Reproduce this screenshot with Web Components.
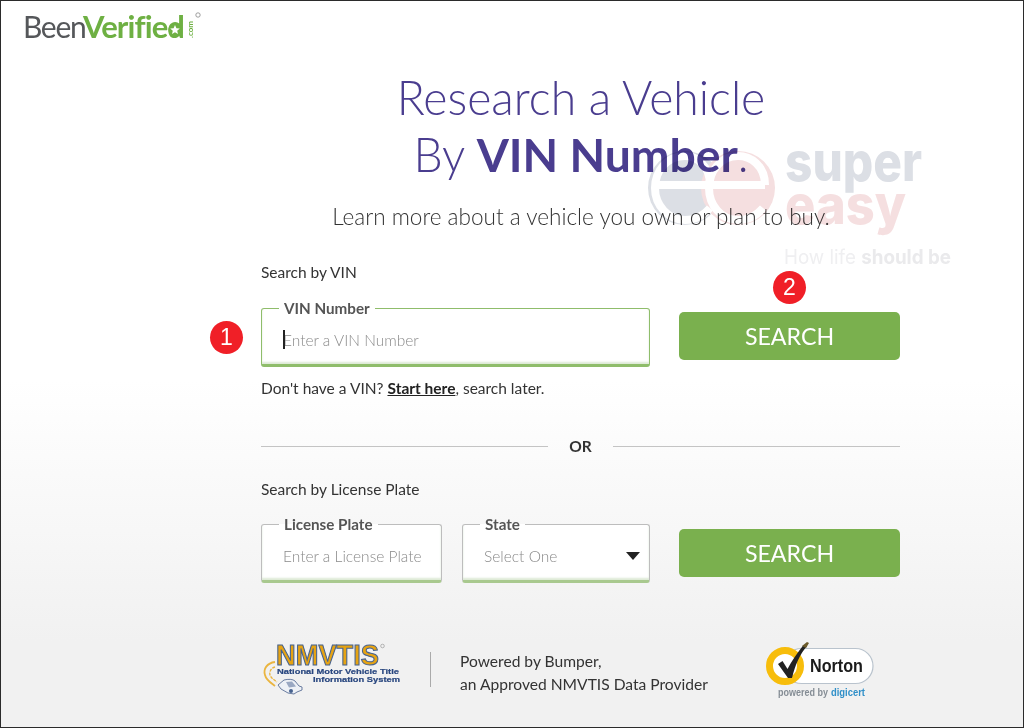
<!DOCTYPE html>
<html lang="en">
<head>
<meta charset="utf-8">
<title>Research a Vehicle</title>
<style>
  html, body { margin: 0; padding: 0; }
  body { font-family: Lato, "Liberation Sans", sans-serif; color: #333; }
</style>
</head>
<body>
<vin-page>
  <brand-logo></brand-logo>
  <hero-title></hero-title>
  <search-panel></search-panel>
  <trust-row></trust-row>
  <sticker-mark></sticker-mark>
</vin-page>

<script>
class VinPage extends HTMLElement {
  constructor() {
    super();
    this.attachShadow({ mode: "open" }).innerHTML = `
      <style>
        :host {
          display: block;
          position: relative;
          width: 1024px;
          height: 728px;
          box-sizing: border-box;
          overflow: hidden;
          border: 1px solid #2b2b2b;
          background: linear-gradient(#fff 0, #fff 380px, #f1f1f1 640px, #f1f1f1 100%);
        }
      </style>
      <slot></slot>
    `;
  }
}

class BrandLogo extends HTMLElement {
  constructor() {
    super();
    this.attachShadow({ mode: "open" }).innerHTML = `
      <style>
        :host { display: block; height: 46px; padding-left: 22px; }
        svg { display: block; }
        text { font-family: Lato, "Open Sans", sans-serif; }
      </style>
      <svg width="190" height="46" viewBox="0 0 190 46">
        <text x="0" y="37" font-size="30" fill="#55575a" letter-spacing="-1.300">Been</text>
        <text x="60" y="37" font-size="31" font-weight="700" fill="#6eb043" letter-spacing="-.900">Verified</text>
        <circle cx="152" cy="29" r="6.500" fill="#6eb043"/>
        <path d="M152 24l1.400 3.200 3.400.3-2.600 2.200.8 3.300-3-1.800-3 1.800.8-3.300-2.600-2.200 3.400-.3z" fill="#fff"/>
        <text transform="translate(170 37) rotate(-90)" font-size="8" font-weight="700" fill="#6eb043">.com</text>
        <circle cx="175" cy="14" r="2.200" fill="none" stroke="#888" stroke-width=".8"/>
      </svg>
    `;
  }
}

class HeroTitle extends HTMLElement {
  constructor() {
    super();
    this.attachShadow({ mode: "open" }).innerHTML = `
      <style>
        :host {
          display: block;
          margin: 22px 123px 0 261px;
          text-align: center;
          color: #4a3d8f;
        }
        h1 { margin: 0; font-size: 46.300px; line-height: 57px; font-weight: 300; }
        b { font-weight: 700; }
        p { margin: 19px 0 0; font-size: 22.550px; line-height: 30px; font-weight: 300; color: #333; }
      </style>
      <h1>Research a Vehicle<br>By <b>VIN Number</b>.</h1>
      <p>Learn more about a vehicle you own or plan to buy.</p>
    `;
  }
}

class FieldBox extends HTMLElement {
  constructor() {
    super();
    const label = this.getAttribute("label");
    const hint = this.getAttribute("placeholder");
    const accent = this.hasAttribute("accent");
    const caret = this.hasAttribute("caret");
    const select = this.hasAttribute("select");
    this.attachShadow({ mode: "open" }).innerHTML = `
      <style>
        :host { display: block; min-width: 0; }
        fieldset {
          margin: 0;
          min-width: 0;
          height: 66px;
          box-sizing: border-box;
          padding: 0 10px 0 21px;
          border: 1px solid ${accent ? "#8fbd6b" : "#bdbdbd"};
          border-bottom: 3px solid ${accent ? "#8fbd6b" : "#a9c98f"};
          border-radius: 3px;
          background: #fff;
          box-shadow: inset 0 -2px 2px rgba(120, 170, 90, .25);
          display: flex;
          align-items: center;
          justify-content: space-between;
        }
        legend {
          padding: 0 5px 0 5px;
          margin-left: -4px;
          font-size: 15.200px;
          line-height: 15px;
          font-weight: 700;
          color: #555;
        }
        .hint {
          position: relative;
          font-size: 15.500px;
          font-weight: 300;
          color: #8a8a8a;
          white-space: nowrap;
        }
        .caret::before {
          content: "";
          position: absolute;
          left: 0;
          top: -1px;
          width: 1.500px;
          height: 19px;
          background: #222;
        }
        .arrow {
          width: 0; height: 0;
          margin-right: -1px;
          border-left: 7px solid transparent;
          border-right: 7px solid transparent;
          border-top: 8px solid #222;
        }
      </style>
      <fieldset>
        <legend>${label}</legend>
        <span class="hint ${caret ? "caret" : ""}">${hint}</span>
        ${select ? '<span class="arrow"></span>' : ""}
      </fieldset>
    `;
  }
}

class SearchButton extends HTMLElement {
  constructor() {
    super();
    this.attachShadow({ mode: "open" }).innerHTML = `
      <style>
        :host { display: block; }
        button {
          display: block;
          width: 221px;
          height: 48px;
          padding: 0;
          border: 0;
          border-radius: 5px;
          background: #7ab04e;
          color: #fff;
          font: 400 23.200px Lato, sans-serif;
        }
      </style>
      <button type="button"><slot></slot></button>
    `;
  }
}

class StepBadge extends HTMLElement {
  constructor() {
    super();
    this.attachShadow({ mode: "open" }).innerHTML = `
      <style>
        :host {
          position: absolute;
          width: 33px;
          height: 33px;
          border-radius: 50%;
          background: #f01f27;
          color: #fff;
          font: 400 23px/33px "Liberation Sans", sans-serif;
          text-align: center;
        }
      </style>
      <slot></slot>
    `;
  }
}

class OrDivider extends HTMLElement {
  constructor() {
    super();
    this.attachShadow({ mode: "open" }).innerHTML = `
      <style>
        :host {
          display: flex;
          align-items: center;
          gap: 21px;
          width: 639px;
          font-size: 15.500px;
          font-weight: 700;
          color: #333;
        }
        i { flex: 1; height: 1px; background: #c4c4c4; }
      </style>
      <i></i><span><slot></slot></span><i></i>
    `;
  }
}

class SearchPanel extends HTMLElement {
  constructor() {
    super();
    this.attachShadow({ mode: "open" }).innerHTML = `
      <style>
        :host {
          display: block;
          position: relative;
          width: 640px;
          margin: 31px 0 0 260px;
          font-size: 15.500px;
          color: #333;
        }
        .label { line-height: 18px; }
        .row { display: grid; align-items: end; column-gap: 29px; }
        .vin { grid-template-columns: 389px 221px; margin-top: 20px; }
        .vin search-button { margin-bottom: 7px; }
        .plate { grid-template-columns: 181px 188px 221px; column-gap: 20px; margin-top: 19px; }
        .plate search-button { margin: 0 0 6px 9px; }
        .help { margin-top: 12px; line-height: 18px; }
        .help a { color: #222; font-weight: 700; text-decoration: underline; }
        or-divider { margin-top: 40px; height: 18px; }
        .second { margin-top: 25px; }
        .one { left: -51px; top: 58px; }
        .two { left: 512px; top: 8px; }
      </style>
      <div class="label">Search by VIN</div>
      <div class="row vin">
        <field-box label="VIN Number" placeholder="Enter a VIN Number" accent caret></field-box>
        <search-button>SEARCH</search-button>
      </div>
      <div class="help">Don't have a VIN? <a>Start here</a>, search later.</div>
      <or-divider>OR</or-divider>
      <div class="label second">Search by License Plate</div>
      <div class="row plate">
        <field-box label="License Plate" placeholder="Enter a License Plate"></field-box>
        <field-box label="State" placeholder="Select One" select></field-box>
        <search-button>SEARCH</search-button>
      </div>
      <step-badge class="one">1</step-badge>
      <step-badge class="two">2</step-badge>
    `;
  }
}

class TrustRow extends HTMLElement {
  constructor() {
    super();
    this.attachShadow({ mode: "open" }).innerHTML = `
      <style>
        :host {
          display: flex;
          align-items: flex-start;
          width: 640px;
          height: 70px;
          margin: 55px 0 0 260px;
          font-size: 15.600px;
          line-height: 23px;
          color: #333;
        }
        svg { display: block; flex: none; }
        .rule { width: 1px; height: 35px; margin: 14px 29px 0 28px; background: #aaa; flex: none; }
        .copy { width: 306px; margin-top: 12px; flex: none; }
        text { font-family: "Liberation Sans", Arial, sans-serif; }
      </style>
      <svg width="141" height="64" viewBox="0 0 141 64">
        <text x="15" y="27" font-size="29" font-weight="700" fill="#e6a312" stroke="#46628f" stroke-width="1.100" textLength="103" lengthAdjust="spacingAndGlyphs">NMVTIS</text>
        <circle cx="121.500" cy="8" r="1.800" fill="none" stroke="#999" stroke-width=".7"/>
        <text x="16" y="36" font-size="8" font-weight="700" fill="#28467f" stroke="#28467f" stroke-width=".2" textLength="122" lengthAdjust="spacingAndGlyphs">National Motor Vehicle Title</text>
        <text x="52" y="44" font-size="8" font-weight="700" fill="#28467f" stroke="#28467f" stroke-width=".2" textLength="87" lengthAdjust="spacingAndGlyphs">Information System</text>
        <path d="M14 24C6 25 2 31 4 37c1 5 6 8 10 11" fill="none" stroke="#eab540" stroke-width="1.800"/>
        <path d="M14 29c-4 1-6 5-5 8 1 3 4 5 7 7" fill="none" stroke="#eab540" stroke-width="1.300" stroke-dasharray="3 1"/>
        <path d="M17 47l6-5c4-1 9-1 11 1l4 5 3 1v3l-5 2-3 2-6-1-7-4z" fill="#eef1f6" stroke="#5b6f96" stroke-width=".9"/>
        <path d="M25 44l6-.5 4 5-7 1z" fill="#9aa8c2"/>
        <circle cx="30" cy="53" r="2" fill="#46628f"/>
      </svg>
      <span class="rule"></span>
      <div class="copy">Powered by Bumper,<br>an Approved NMVTIS Data Provider</div>
      <svg width="110" height="64" viewBox="0 0 110 64">
        <rect x="18" y="10.500" width="89" height="35" rx="17.500" fill="#fff" stroke="#b9c3cd" stroke-width="1.200"/>
        <circle cx="19" cy="28" r="15.500" fill="#fff" stroke="#f7bd0b" stroke-width="7"/>
        <path d="M12 26l4.500-3 5 8c4-8 9-15 16-24l3.500 1c-7 8-12 19-15 32h-4z" fill="#222"/>
        <path d="M36 8l5-4 2 1-3 5z" fill="#6b5a2a"/>
        <text x="44" y="34" font-size="18" font-weight="700" fill="#1b1b1b" textLength="53" lengthAdjust="spacingAndGlyphs">Norton</text>
        <text x="12" y="58" font-size="10" font-weight="700" fill="#858d95" textLength="50" lengthAdjust="spacingAndGlyphs">powered by</text>
        <text x="65" y="58" font-size="10.500" font-weight="700" fill="#2f8fc8" textLength="34" lengthAdjust="spacingAndGlyphs">digicert</text>
      </svg>
    `;
  }
}

// the faint site watermark that lies over the page
class StickerMark extends HTMLElement {
  constructor() {
    super();
    this.attachShadow({ mode: "open" }).innerHTML = `
      <style>
        :host { position: absolute; left: 640px; top: 115px; pointer-events: none; mix-blend-mode: multiply; }
        svg { display: block; filter: blur(.5px); }
        text { font-family: Inter, "Liberation Sans", sans-serif; }
      </style>
      <svg width="330" height="165" viewBox="0 -15 330 165">
        <circle cx="44" cy="57" r="37" fill="#dcdfe5"/>
        <circle cx="97" cy="57" r="37" fill="#f5dfe0"/>
        <path d="M16 54h53M69 54C69 34 55 25 44 25 26 25 14 40 14 57s13 32 30 32c10 0 19-5 25-12" fill="none" stroke="#fff" stroke-width="8"/>
        <path d="M69 54h55M124 54c0-20-15-29-27-29-17 0-29 15-29 32s12 32 29 32c11 0 19-5 25-12" fill="none" stroke="#fff" stroke-width="8"/>
        <text x="144" y="50" font-size="55" font-weight="800" fill="#dcdfe5" textLength="137" lengthAdjust="spacingAndGlyphs">super</text>
        <text x="144" y="93" font-size="55" font-weight="800" fill="#f5dfe0" textLength="121" lengthAdjust="spacingAndGlyphs">easy</text>
        <text x="143" y="133" font-size="20" fill="#efeff1" textLength="167" lengthAdjust="spacingAndGlyphs">How life <tspan font-weight="700" fill="#eaeaec">should be</tspan></text>
      </svg>
    `;
  }
}

customElements.define("vin-page", VinPage);
customElements.define("brand-logo", BrandLogo);
customElements.define("hero-title", HeroTitle);
customElements.define("field-box", FieldBox);
customElements.define("search-button", SearchButton);
customElements.define("step-badge", StepBadge);
customElements.define("or-divider", OrDivider);
customElements.define("search-panel", SearchPanel);
customElements.define("trust-row", TrustRow);
customElements.define("sticker-mark", StickerMark);
</script>
</body>
</html>
